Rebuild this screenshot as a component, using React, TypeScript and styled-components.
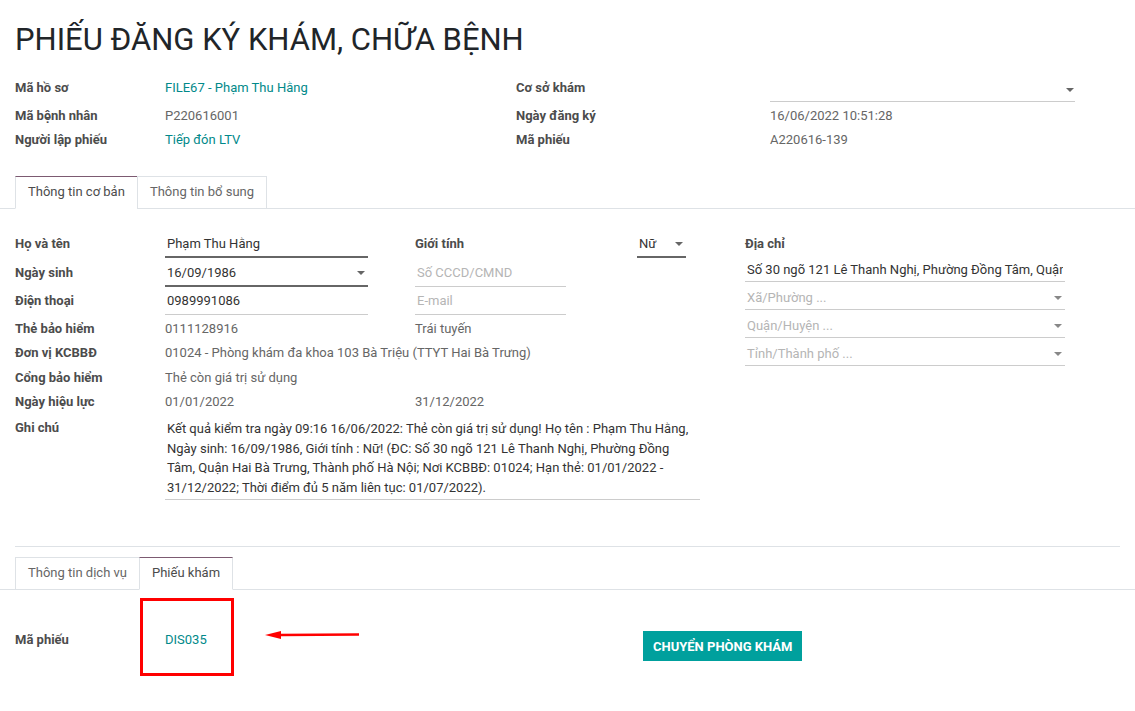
import React from 'react';
import styled, { createGlobalStyle } from 'styled-components';

const GlobalStyle = createGlobalStyle`
  * { box-sizing: border-box; }
  html, body { margin: 0; padding: 0; background: #fff; }
  body {
    font-family: Roboto, "Noto Sans", "Liberation Sans", sans-serif;
    font-size: 13px;
    color: #4c4c4c;
  }
`;

const Page = styled.div`
  width: 1135px;
  min-height: 711px;
  padding-top: 21px;
  background: #fff;
  overflow: hidden;
`;

const Title = styled.h1`
  margin: 0 0 19px 15px;
  font-size: 31px;
  font-weight: 400;
  line-height: 38px;
  color: #212529;
  white-space: nowrap;
`;

const Header = styled.div`
  display: grid;
  grid-template-columns: 501px 559px;
  padding-left: 15px;
`;

const InfoGroup = styled.div<{ $label: number }>`
  display: grid;
  grid-template-columns: ${(p) => p.$label}px 1fr;
  grid-template-rows: 28px 24px 24px;
  align-items: start;
`;

const Label = styled.div`
  font-weight: 700;
  line-height: 20px;
  color: #4c4c4c;
  white-space: nowrap;
`;

const Value = styled.div<{ $link?: boolean; $span?: boolean }>`
  line-height: 20px;
  color: ${(p) => (p.$link ? '#01898a' : '#666')};
  white-space: nowrap;
  ${(p) => (p.$span ? 'grid-column: 2 / 4;' : '')}
`;

const Caret = styled.span<{ $light?: boolean }>`
  flex: none;
  width: 0;
  height: 0;
  margin-right: 1px;
  border-left: 4px solid transparent;
  border-right: 4px solid transparent;
  border-top: 4px solid ${(p) => (p.$light ? '#888' : '#666')};
`;

const Field = styled.div<{ $w: number; $dark?: boolean; $placeholder?: boolean }>`
  display: flex;
  align-items: center;
  justify-content: space-between;
  width: ${(p) => p.$w}px;
  padding: 0 2px ${(p) => (p.$dark ? 2 : 3)}px 2px;
  line-height: 20px;
  color: ${(p) => (p.$placeholder ? '#b5b5b5' : '#333')};
  border-bottom: ${(p) => (p.$dark ? '2px solid #666' : '1px solid #ccc')};
  white-space: nowrap;
`;

const HeaderSelect = styled.div`
  display: flex;
  align-items: center;
  justify-content: flex-end;
  width: 305px;
  height: 24px;
  border-bottom: 1px solid #ccc;
`;

const Tabs = styled.div<{ $top: number }>`
  display: flex;
  margin-top: ${(p) => p.$top}px;
  padding-left: 15px;
  border-bottom: 1px solid #dee2e6;
`;

const Tab = styled.div<{ $active?: boolean }>`
  margin-bottom: -1px;
  padding: 5px 12px 6px;
  line-height: 20px;
  background: #fff;
  border: 1px solid #dee2e6;
  border-top-color: ${(p) => (p.$active ? '#7c5a71' : '#dee2e6')};
  border-bottom-color: ${(p) => (p.$active ? '#fff' : '#dee2e6')};
  color: ${(p) => (p.$active ? '#4c4c4c' : '#666')};
  white-space: nowrap;
  & + & {
    margin-left: -1px;
  }
`;

const FormArea = styled.div`
  display: flex;
  padding: 25px 0 0 15px;
`;

const FormGrid = styled.div`
  display: grid;
  width: 730px;
  grid-template-columns: 150px 250px 330px;
  grid-template-rows: 29px 28px 28px 24px 25px 24px 26px auto;
  align-items: start;
`;

const GenderCell = styled.div`
  display: flex;
  align-items: flex-start;
`;

const GenderLabel = styled(Label)`
  width: 222px;
`;

const Notes = styled.div`
  grid-column: 2 / 4;
  width: 535px;
  padding: 1px 2px 2px;
  line-height: 19.5px;
  color: #333;
  border-bottom: 1px solid #ccc;
`;

const AddressCol = styled.div`
  width: 320px;
  display: flex;
  flex-direction: column;
`;

const AddrInput = styled.div<{ $placeholder?: boolean }>`
  display: flex;
  align-items: center;
  justify-content: space-between;
  padding: 6px 2px 1px;
  line-height: 20px;
  color: ${(p) => (p.$placeholder ? '#b5b5b5' : '#333')};
  border-bottom: 1px solid #ccc;
  white-space: nowrap;
  overflow: hidden;
`;

const AddrText = styled.span`
  overflow: hidden;
`;

const Separator = styled.hr`
  margin: 46px 15px 0;
  border: 0;
  border-top: 1px solid #dee2e6;
`;

const BottomPanel = styled.div`
  display: flex;
  align-items: flex-start;
  padding: 40px 0 0 15px;
`;

const BottomLabel = styled(Label)`
  width: 150px;
`;

const TicketCell = styled.div`
  position: relative;
  width: 478px;
  line-height: 20px;
  color: #01898a;
`;

const Highlight = styled.div`
  position: absolute;
  left: -25px;
  top: -32px;
  width: 94px;
  height: 78px;
  border: 3px solid #ff0000;
`;

const Pointer = styled.svg`
  position: absolute;
  left: 99px;
  top: -1px;
`;

const Button = styled.button`
  margin-top: 1px;
  height: 30px;
  padding: 0 10px;
  border: 0;
  background: #00a09d;
  color: #fff;
  font-family: Roboto, "Noto Sans", sans-serif;
  font-size: 13px;
  font-weight: 700;
  text-transform: uppercase;
  white-space: nowrap;
  cursor: pointer;
`;

export default function App() {
  return (
    <Page>
      <GlobalStyle />
      <Title>PHIẾU ĐĂNG KÝ KHÁM, CHỮA BỆNH</Title>

      <Header>
        <InfoGroup $label={150}>
          <Label>Mã hồ sơ</Label>
          <Value $link>FILE67 - Phạm Thu Hằng</Value>
          <Label>Mã bệnh nhân</Label>
          <Value>P220616001</Value>
          <Label>Người lập phiếu</Label>
          <Value $link>Tiếp đón LTV</Value>
        </InfoGroup>
        <InfoGroup $label={254}>
          <Label>Cơ sở khám</Label>
          <HeaderSelect>
            <Caret />
          </HeaderSelect>
          <Label>Ngày đăng ký</Label>
          <Value>16/06/2022 10:51:28</Value>
          <Label>Mã phiếu</Label>
          <Value>A220616-139</Value>
        </InfoGroup>
      </Header>

      <Tabs $top={22}>
        <Tab $active>Thông tin cơ bản</Tab>
        <Tab>Thông tin bổ sung</Tab>
      </Tabs>

      <FormArea>
        <FormGrid>
          <Label>Họ và tên</Label>
          <Field $w={203} $dark>Phạm Thu Hằng</Field>
          <GenderCell>
            <GenderLabel>Giới tính</GenderLabel>
            <Field $w={49} $dark>
              Nữ
              <Caret />
            </Field>
          </GenderCell>

          <Label>Ngày sinh</Label>
          <Field $w={203} $dark>
            16/09/1986
            <Caret />
          </Field>
          <Field $w={151} $placeholder>Số CCCD/CMND</Field>

          <Label>Điện thoại</Label>
          <Field $w={203}>0989991086</Field>
          <Field $w={151} $placeholder>E-mail</Field>

          <Label>Thẻ bảo hiểm</Label>
          <Value>0111128916</Value>
          <Value>Trái tuyến</Value>

          <Label>Đơn vị KCBBĐ</Label>
          <Value $span>01024 - Phòng khám đa khoa 103 Bà Triệu (TTYT Hai Bà Trưng)</Value>

          <Label>Cổng bảo hiểm</Label>
          <Value $span>Thẻ còn giá trị sử dụng</Value>

          <Label>Ngày hiệu lực</Label>
          <Value>01/01/2022</Value>
          <Value>31/12/2022</Value>

          <Label>Ghi chú</Label>
          <Notes>
            Kết quả kiểm tra ngày 09:16 16/06/2022: Thẻ còn giá trị sử dụng! Họ tên : Phạm Thu Hằng,
            Ngày sinh: 16/09/1986, Giới tính : Nữ! (ĐC: Số 30 ngõ 121 Lê Thanh Nghị, Phường Đồng
            Tâm, Quận Hai Bà Trưng, Thành phố Hà Nội; Nơi KCBBĐ: 01024; Hạn thẻ: 01/01/2022 -
            31/12/2022; Thời điểm đủ 5 năm liên tục: 01/07/2022).
          </Notes>
        </FormGrid>

        <AddressCol>
          <Label>Địa chỉ</Label>
          <AddrInput>
            <AddrText>Số 30 ngõ 121 Lê Thanh Nghị, Phường Đồng Tâm, Quận Hai Bà Trưng, Thành phố Hà Nội</AddrText>
          </AddrInput>
          <AddrInput $placeholder>
            Xã/Phường ...
            <Caret $light />
          </AddrInput>
          <AddrInput $placeholder>
            Quận/Huyện ...
            <Caret $light />
          </AddrInput>
          <AddrInput $placeholder>
            Tỉnh/Thành phố ...
            <Caret $light />
          </AddrInput>
        </AddressCol>
      </FormArea>

      <Separator />

      <Tabs $top={10}>
        <Tab>Thông tin dịch vụ</Tab>
        <Tab $active>Phiếu khám</Tab>
      </Tabs>

      <BottomPanel>
        <BottomLabel>Mã phiếu</BottomLabel>
        <TicketCell>
          DIS035
          <Highlight />
          <Pointer width="96" height="12" viewBox="0 0 96 12">
            <polygon points="1,6 17,2 17,10" fill="#ff0000" />
            <line x1="16" y1="6" x2="95" y2="5.5" stroke="#ff0000" strokeWidth="2.5" />
          </Pointer>
        </TicketCell>
        <Button>Chuyển phòng khám</Button>
      </BottomPanel>
    </Page>
  );
}
